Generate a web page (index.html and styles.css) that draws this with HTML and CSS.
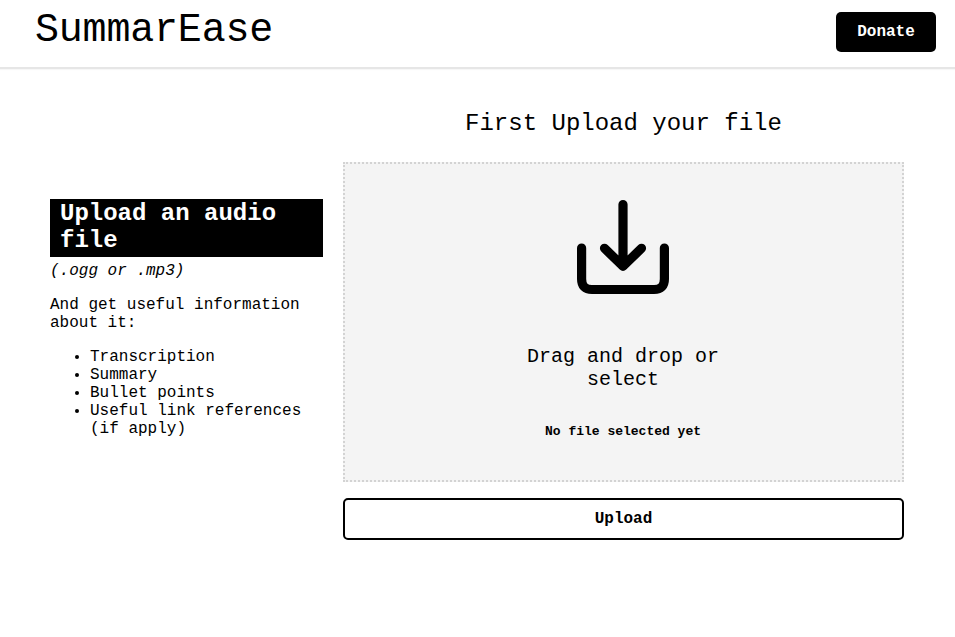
FILE: index.html
```html
<!DOCTYPE html>
<html lang="en">
<head>
<meta charset="utf-8">
<title>SummarEase</title>
<link rel="stylesheet" href="styles.css">
</head>
<body>
<header class="header">
  <h1 class="logo">SummarEase</h1>
  <a class="donate">Donate</a>
</header>
<main class="main">
  <section class="intro">
    <h2 class="intro-title">Upload an audio file</h2>
    <em class="formats">(.ogg or .mp3)</em>
    <p class="lead">And get useful information about it:</p>
    <ul class="features">
      <li>Transcription</li>
      <li>Summary</li>
      <li>Bullet points</li>
      <li>Useful link references (if apply)</li>
    </ul>
  </section>
  <section class="uploader">
    <h2 class="step">First Upload your file</h2>
    <div class="dropzone">
      <svg class="icon" viewBox="0 0 92 96" fill="none" stroke="#000" stroke-width="9.2" stroke-linecap="round" stroke-linejoin="round">
        <path d="M46 5.500V66M27.500 49.300L46 67.300L64.500 49.300M4.600 49V80Q4.600 90.500 15 90.500H77Q87.400 90.500 87.400 80V49"/>
      </svg>
      <p class="hint">Drag and drop or select</p>
      <p class="status">No file selected yet</p>
    </div>
    <button class="upload">Upload</button>
  </section>
</main>
</body>
</html>
```
FILE: styles.css
```css
* { box-sizing: border-box; }
body {
  margin: 0;
  background: #fff;
  color: #000;
  font: 16px/18px "Courier New", "Liberation Mono", monospace;
}
.header {
  display: flex;
  justify-content: space-between;
  align-items: flex-start;
  height: 69px;
  padding: 12px 19px 0 35px;
  border-bottom: 2px solid #e6e6e6;
  box-shadow: 0 1px 1px #f7f7f7;
}
.logo { margin: 0; font-size: 40px; line-height: 37px; font-weight: 400; letter-spacing: -0.2px; }
.donate {
  width: 100px;
  height: 40px;
  border-radius: 5px;
  background: #000;
  color: #fff;
  font-weight: 700;
  line-height: 40px;
  text-align: center;
}
.main {
  display: grid;
  grid-template-columns: 273px 561px;
  column-gap: 20px;
  padding: 40px 50px 0;
}
.intro { padding-top: 90px; }
.intro-title {
  margin: 0 0 5px;
  padding: 1px 10px 3px;
  background: #000;
  color: #fff;
  font-size: 24px;
  line-height: 27px;
}
.formats { display: block; }
.lead { margin: 16px 0; }
.features { margin: 0; padding-left: 40px; }
.step { margin: 0 0 24px; font-size: 24px; line-height: 29px; font-weight: 400; text-align: center; }
.dropzone {
  display: flex;
  flex-direction: column;
  align-items: center;
  height: 320px;
  padding: 35px 1px 0 0;
  border: 2px dotted #d3d3d3;
  background: #f4f4f4;
  text-align: center;
}
.icon { width: 92px; height: 96px; }
.hint { width: 220px; margin: 50px 0 34px; font-size: 20px; line-height: 23px; }
.status { margin: 0; font-size: 13px; line-height: 14px; font-weight: 700; }
.upload {
  display: block;
  width: 100%;
  height: 42px;
  margin-top: 16px;
  border: 2px solid #000;
  border-radius: 5px;
  background: #fff;
  color: #000;
  font: 700 16px "Courier New", "Liberation Mono", monospace;
}
```
